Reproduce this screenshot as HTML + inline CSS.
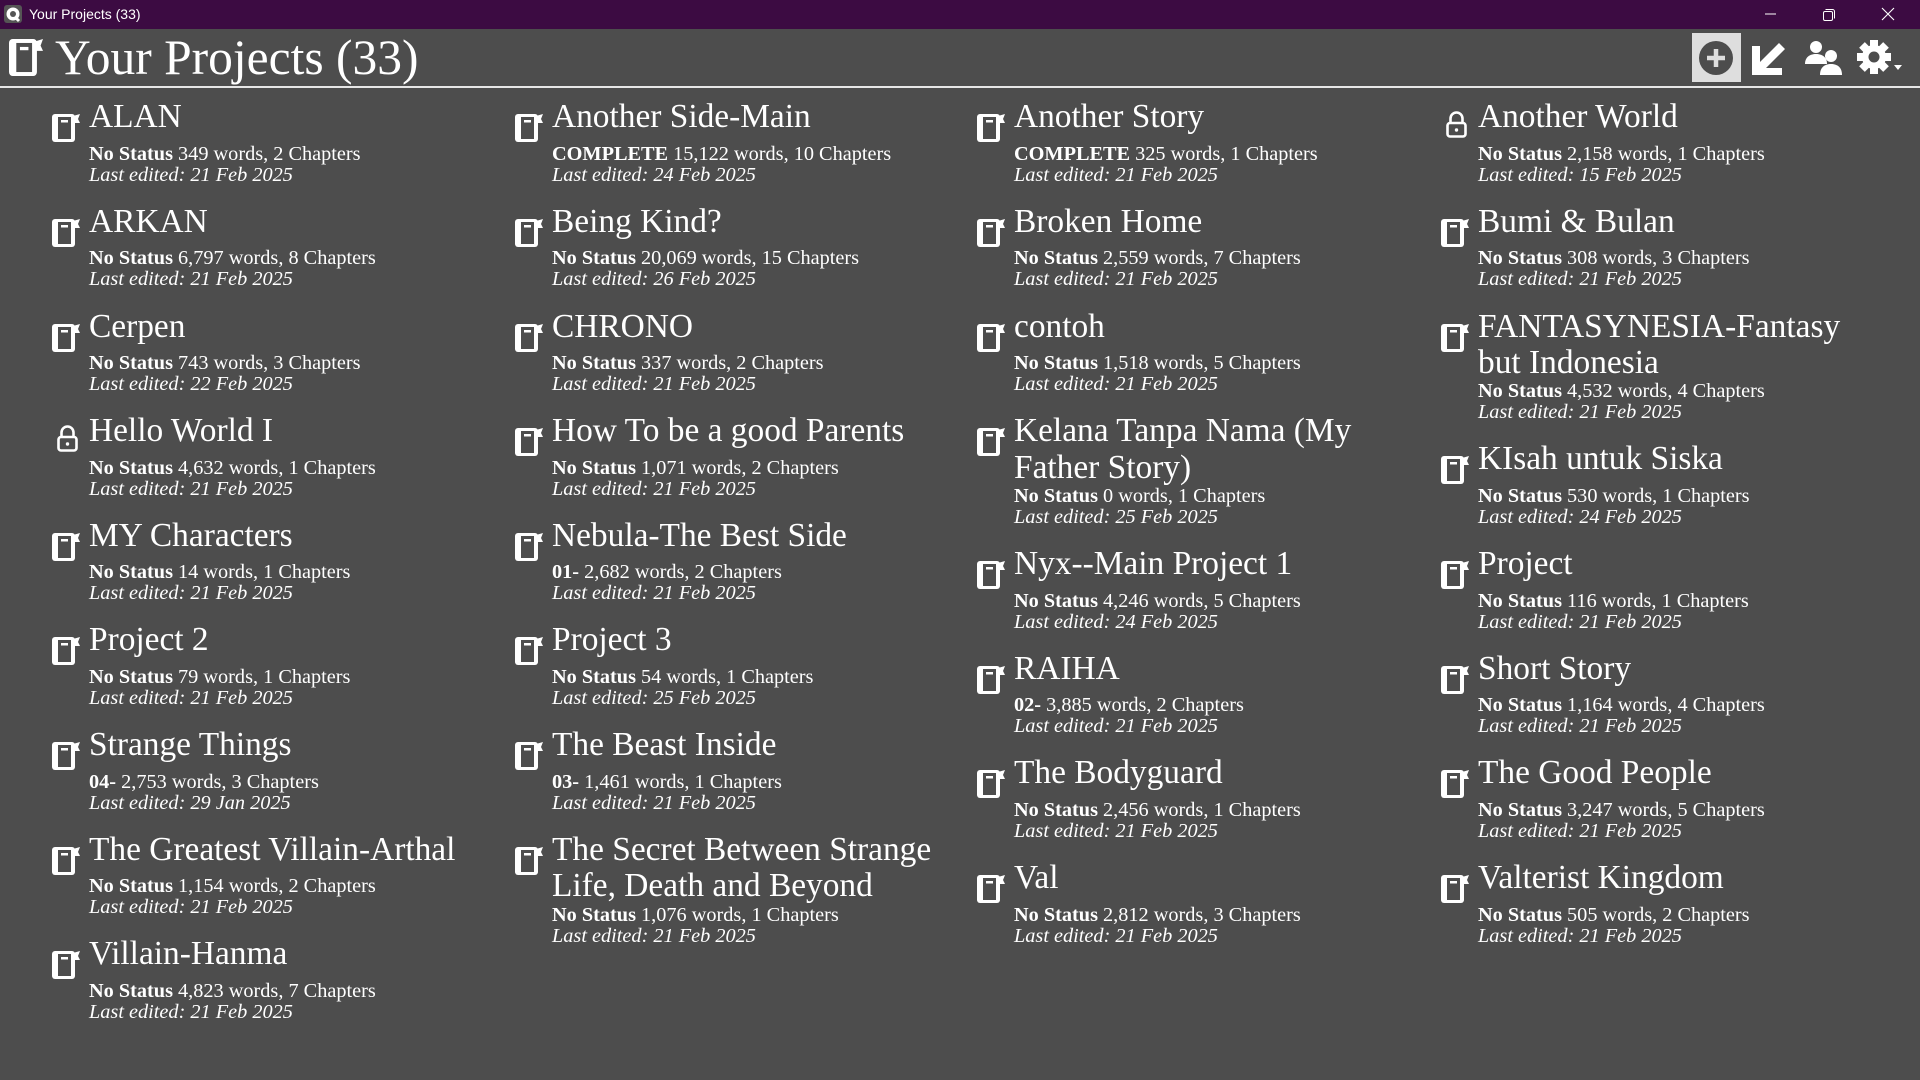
<!DOCTYPE html>
<html><head><meta charset="utf-8"><style>
*{margin:0;padding:0;box-sizing:border-box}
body{width:1920px;height:1080px;background:#4d4d4d;overflow:hidden;font-family:"Liberation Serif",serif;color:#fff;position:relative}
.tb{position:absolute;left:0;top:0;width:1920px;height:29px;background:#3c0b42;font-family:"Liberation Sans",sans-serif;font-size:14px;color:#fff}
.tb .t{position:absolute;left:29px;top:6px}
.hdr{position:absolute;left:0;top:29px;width:1920px;height:58px}
.hdr h1{position:absolute;left:55px;top:3px;font-weight:normal;font-size:49.5px;line-height:52px}
.line{position:absolute;left:0;top:86px;width:1920px;height:2px;background:#e6e6e6}
.col{position:absolute;top:99.3px;width:460px}
.it{position:relative;margin-bottom:18.1px}
.it .ti{font-size:33.4px;line-height:36.7px;height:36.7px;white-space:nowrap}
.it .ti.w{height:65px}
.it .m{margin-top:7.85px;font-size:20.3px;line-height:21px;white-space:nowrap}
.it .d{font-size:20.3px;line-height:21px;font-style:italic;white-space:nowrap}
.ic{position:absolute;left:-37px;top:15px;width:28px;height:28px}
.lk{position:absolute;left:-32px;top:12px;width:21px;height:27px}
</style></head><body>
<svg width="0" height="0" style="position:absolute"><defs>
<symbol id="bk" viewBox="0 0 28 28"><rect x="0" y="0" width="23" height="28" rx="3" fill="#fff"/><polygon points="21,2 28,0 26,5 28,9 21,9" fill="#fff"/><rect x="6" y="3" width="13" height="22" fill="#4d4d4d"/><rect x="9" y="6" width="7" height="2.5" fill="#fff"/></symbol>
<symbol id="lk" viewBox="0 0 21 27"><path d="M4.5 12V7.5a6 6 0 0 1 12 0V12" fill="none" stroke="#fff" stroke-width="2.6"/><rect x="1.5" y="12" width="18" height="13.5" rx="2.5" fill="none" stroke="#fff" stroke-width="2.6"/><circle cx="10.5" cy="19" r="1.7" fill="#fff"/></symbol>
</defs></svg>
<div class="tb"><svg style="position:absolute;left:4px;top:5px" width="18" height="18" viewBox="0 0 18 18"><rect width="18" height="18" rx="3" fill="#555"/><circle cx="9" cy="9" r="6.5" fill="#fff"/><circle cx="9" cy="9" r="3" fill="#555"/><path d="M11 12l4 4" stroke="#fff" stroke-width="3"/></svg><span class="t">Your Projects (33)</span>
<svg style="position:absolute;left:1764px;top:9px" width="14" height="10"><path d="M1 5h11" stroke="#fff" stroke-width="1"/></svg>
<svg style="position:absolute;left:1822px;top:8px" width="14" height="14"><rect x="1.5" y="3.5" width="9" height="9" rx="1.5" fill="none" stroke="#fff"/><path d="M3.5 1.5h7a2 2 0 0 1 2 2v7" fill="none" stroke="#fff"/></svg>
<svg style="position:absolute;left:1881px;top:7px" width="14" height="14"><path d="M1 1l12 12M13 1L1 13" stroke="#fff" stroke-width="1.1"/></svg>
</div>
<div class="hdr">
<svg style="position:absolute;left:9px;top:10px" width="34" height="37" viewBox="0 0 28 28" preserveAspectRatio="none"><use href="#bk"/></svg>
<h1>Your Projects (33)</h1>
<div style="position:absolute;left:1692px;top:4px;width:49px;height:49px;background:#dedede"></div>
<svg style="position:absolute;left:1697px;top:10px" width="38" height="38" viewBox="0 0 38 38"><circle cx="19" cy="19" r="17" fill="#4d4d4d"/><path d="M19 10v18M10 19h18" stroke="#dedede" stroke-width="4.5"/></svg>
<svg style="position:absolute;left:1750px;top:10px" width="38" height="38" viewBox="0 0 38 38"><path d="M2 7h8v16L29 4l6 6L16 29h16v7H2z" fill="#fff"/></svg>
<svg style="position:absolute;left:1803px;top:9px" width="40" height="40" viewBox="0 0 40 40"><circle cx="13" cy="9" r="6" fill="#fff"/><path d="M2 26c0-7 5-10 11-10s11 3 11 10z" fill="#fff"/><circle cx="28" cy="18" r="6" fill="#fff"/><path d="M17 37c0-8 5-11 11-11s11 3 11 11z" fill="#fff"/></svg>
<svg style="position:absolute;left:1856px;top:9px" width="48" height="40" viewBox="0 0 48 40"><g transform="translate(18 19)"><g fill="#fff"><circle r="12"/><rect x="-4" y="-17" width="8" height="34"/><rect x="-4" y="-17" width="8" height="34" transform="rotate(45)"/><rect x="-4" y="-17" width="8" height="34" transform="rotate(90)"/><rect x="-4" y="-17" width="8" height="34" transform="rotate(135)"/></g><circle r="5.5" fill="#4d4d4d"/></g><path d="M38 27h8l-4 5z" fill="#fff"/></svg>
</div>
<div class="line"></div>

<div class="col" style="left:89px">
<div class="it"><svg class="ic"><use href="#bk"/></svg><div class="ti">ALAN</div><div class="m"><b>No Status</b> 349 words, 2 Chapters</div><div class="d">Last edited: 21 Feb 2025</div></div>
<div class="it"><svg class="ic"><use href="#bk"/></svg><div class="ti">ARKAN</div><div class="m"><b>No Status</b> 6,797 words, 8 Chapters</div><div class="d">Last edited: 21 Feb 2025</div></div>
<div class="it"><svg class="ic"><use href="#bk"/></svg><div class="ti">Cerpen</div><div class="m"><b>No Status</b> 743 words, 3 Chapters</div><div class="d">Last edited: 22 Feb 2025</div></div>
<div class="it"><svg class="lk"><use href="#lk"/></svg><div class="ti">Hello World I</div><div class="m"><b>No Status</b> 4,632 words, 1 Chapters</div><div class="d">Last edited: 21 Feb 2025</div></div>
<div class="it"><svg class="ic"><use href="#bk"/></svg><div class="ti">MY Characters</div><div class="m"><b>No Status</b> 14 words, 1 Chapters</div><div class="d">Last edited: 21 Feb 2025</div></div>
<div class="it"><svg class="ic"><use href="#bk"/></svg><div class="ti">Project 2</div><div class="m"><b>No Status</b> 79 words, 1 Chapters</div><div class="d">Last edited: 21 Feb 2025</div></div>
<div class="it"><svg class="ic"><use href="#bk"/></svg><div class="ti">Strange Things</div><div class="m"><b>04-</b> 2,753 words, 3 Chapters</div><div class="d">Last edited: 29 Jan 2025</div></div>
<div class="it"><svg class="ic"><use href="#bk"/></svg><div class="ti">The Greatest Villain-Arthal</div><div class="m"><b>No Status</b> 1,154 words, 2 Chapters</div><div class="d">Last edited: 21 Feb 2025</div></div>
<div class="it"><svg class="ic"><use href="#bk"/></svg><div class="ti">Villain-Hanma</div><div class="m"><b>No Status</b> 4,823 words, 7 Chapters</div><div class="d">Last edited: 21 Feb 2025</div></div>
</div>

<div class="col" style="left:552px">
<div class="it"><svg class="ic"><use href="#bk"/></svg><div class="ti">Another Side-Main</div><div class="m"><b>COMPLETE</b> 15,122 words, 10 Chapters</div><div class="d">Last edited: 24 Feb 2025</div></div>
<div class="it"><svg class="ic"><use href="#bk"/></svg><div class="ti">Being Kind?</div><div class="m"><b>No Status</b> 20,069 words, 15 Chapters</div><div class="d">Last edited: 26 Feb 2025</div></div>
<div class="it"><svg class="ic"><use href="#bk"/></svg><div class="ti">CHRONO</div><div class="m"><b>No Status</b> 337 words, 2 Chapters</div><div class="d">Last edited: 21 Feb 2025</div></div>
<div class="it"><svg class="ic"><use href="#bk"/></svg><div class="ti">How To be a good Parents</div><div class="m"><b>No Status</b> 1,071 words, 2 Chapters</div><div class="d">Last edited: 21 Feb 2025</div></div>
<div class="it"><svg class="ic"><use href="#bk"/></svg><div class="ti">Nebula-The Best Side</div><div class="m"><b>01-</b> 2,682 words, 2 Chapters</div><div class="d">Last edited: 21 Feb 2025</div></div>
<div class="it"><svg class="ic"><use href="#bk"/></svg><div class="ti">Project 3</div><div class="m"><b>No Status</b> 54 words, 1 Chapters</div><div class="d">Last edited: 25 Feb 2025</div></div>
<div class="it"><svg class="ic"><use href="#bk"/></svg><div class="ti">The Beast Inside</div><div class="m"><b>03-</b> 1,461 words, 1 Chapters</div><div class="d">Last edited: 21 Feb 2025</div></div>
<div class="it"><svg class="ic"><use href="#bk"/></svg><div class="ti w">The Secret Between Strange<br>Life, Death and Beyond</div><div class="m"><b>No Status</b> 1,076 words, 1 Chapters</div><div class="d">Last edited: 21 Feb 2025</div></div>
</div>

<div class="col" style="left:1014px">
<div class="it"><svg class="ic"><use href="#bk"/></svg><div class="ti">Another Story</div><div class="m"><b>COMPLETE</b> 325 words, 1 Chapters</div><div class="d">Last edited: 21 Feb 2025</div></div>
<div class="it"><svg class="ic"><use href="#bk"/></svg><div class="ti">Broken Home</div><div class="m"><b>No Status</b> 2,559 words, 7 Chapters</div><div class="d">Last edited: 21 Feb 2025</div></div>
<div class="it"><svg class="ic"><use href="#bk"/></svg><div class="ti">contoh</div><div class="m"><b>No Status</b> 1,518 words, 5 Chapters</div><div class="d">Last edited: 21 Feb 2025</div></div>
<div class="it"><svg class="ic"><use href="#bk"/></svg><div class="ti w">Kelana Tanpa Nama (My<br>Father Story)</div><div class="m"><b>No Status</b> 0 words, 1 Chapters</div><div class="d">Last edited: 25 Feb 2025</div></div>
<div class="it"><svg class="ic"><use href="#bk"/></svg><div class="ti">Nyx--Main Project 1</div><div class="m"><b>No Status</b> 4,246 words, 5 Chapters</div><div class="d">Last edited: 24 Feb 2025</div></div>
<div class="it"><svg class="ic"><use href="#bk"/></svg><div class="ti">RAIHA</div><div class="m"><b>02-</b> 3,885 words, 2 Chapters</div><div class="d">Last edited: 21 Feb 2025</div></div>
<div class="it"><svg class="ic"><use href="#bk"/></svg><div class="ti">The Bodyguard</div><div class="m"><b>No Status</b> 2,456 words, 1 Chapters</div><div class="d">Last edited: 21 Feb 2025</div></div>
<div class="it"><svg class="ic"><use href="#bk"/></svg><div class="ti">Val</div><div class="m"><b>No Status</b> 2,812 words, 3 Chapters</div><div class="d">Last edited: 21 Feb 2025</div></div>
</div>

<div class="col" style="left:1478px">
<div class="it"><svg class="lk"><use href="#lk"/></svg><div class="ti">Another World</div><div class="m"><b>No Status</b> 2,158 words, 1 Chapters</div><div class="d">Last edited: 15 Feb 2025</div></div>
<div class="it"><svg class="ic"><use href="#bk"/></svg><div class="ti">Bumi &amp; Bulan</div><div class="m"><b>No Status</b> 308 words, 3 Chapters</div><div class="d">Last edited: 21 Feb 2025</div></div>
<div class="it"><svg class="ic"><use href="#bk"/></svg><div class="ti w">FANTASYNESIA-Fantasy<br>but Indonesia</div><div class="m"><b>No Status</b> 4,532 words, 4 Chapters</div><div class="d">Last edited: 21 Feb 2025</div></div>
<div class="it"><svg class="ic"><use href="#bk"/></svg><div class="ti">KIsah untuk Siska</div><div class="m"><b>No Status</b> 530 words, 1 Chapters</div><div class="d">Last edited: 24 Feb 2025</div></div>
<div class="it"><svg class="ic"><use href="#bk"/></svg><div class="ti">Project</div><div class="m"><b>No Status</b> 116 words, 1 Chapters</div><div class="d">Last edited: 21 Feb 2025</div></div>
<div class="it"><svg class="ic"><use href="#bk"/></svg><div class="ti">Short Story</div><div class="m"><b>No Status</b> 1,164 words, 4 Chapters</div><div class="d">Last edited: 21 Feb 2025</div></div>
<div class="it"><svg class="ic"><use href="#bk"/></svg><div class="ti">The Good People</div><div class="m"><b>No Status</b> 3,247 words, 5 Chapters</div><div class="d">Last edited: 21 Feb 2025</div></div>
<div class="it"><svg class="ic"><use href="#bk"/></svg><div class="ti">Valterist Kingdom</div><div class="m"><b>No Status</b> 505 words, 2 Chapters</div><div class="d">Last edited: 21 Feb 2025</div></div>
</div>
</body></html>
